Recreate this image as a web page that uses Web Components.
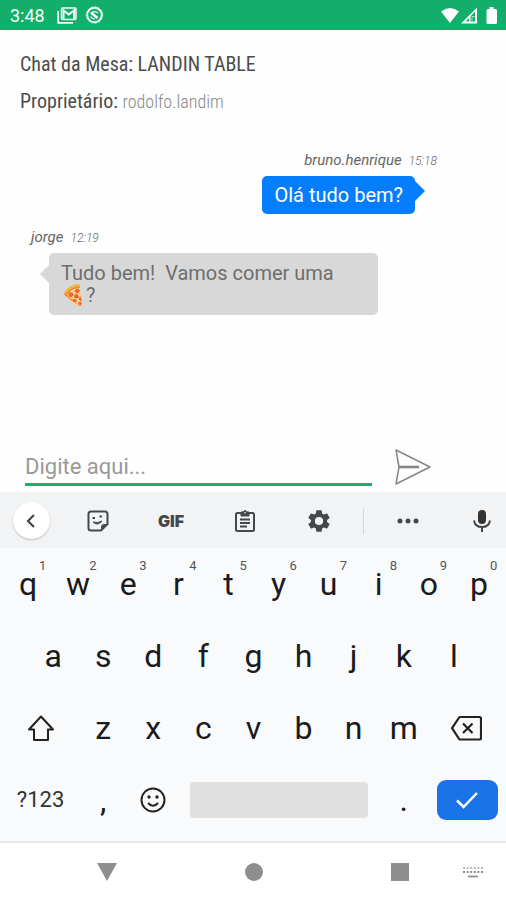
<!DOCTYPE html>
<html lang="pt-BR">
<head>
<meta charset="utf-8">
<meta name="viewport" content="width=device-width, initial-scale=1">
<title>Chat da Mesa</title>
<style>
  html, body { margin: 0; }
  body { font-family: Roboto, "Liberation Sans", sans-serif; background: #fefefe; color: #555; }
</style>
</head>
<body>
<chat-app></chat-app>

<script>
const define = (name, html, setup) => {
  const template = document.createElement('template');
  template.innerHTML = html;
  customElements.define(name, class extends HTMLElement {
    connectedCallback() {
      if (this.shadowRoot) return;
      this.attachShadow({ mode: 'open' }).append(template.content.cloneNode(true));
      if (setup) setup(this, this.shadowRoot);
    }
  });
};

const button = 'button{font:inherit;color:inherit;background:none;border:0;padding:0;margin:0;cursor:pointer;display:flex;align-items:center;justify-content:center}svg{display:block}';

define('status-bar', `
<style>
  :host { display: flex; align-items: center; height: 30px; padding: 0 8px 0 10px; background: #12ae6a; color: #f4fff9; box-sizing: border-box; }
  time { font-size: 18px; line-height: 30px; font-weight: 400; margin-right: 12px; padding-top: 2px; }
  .icons { display: flex; align-items: center; gap: 8px; }
  .right { margin-left: auto; gap: 1px; }
  svg { display: block; }
  .battery { margin-left: 7px; }
</style>
<time>3:48</time>
<div class="icons">
  <svg width="20" height="17" viewBox="0 0 20 17" fill="none" stroke="currentColor"><path d="M1.2 4v11.8H16" stroke-width="1.7"/><rect x="4.500" y="1" width="14.500" height="11.500" rx="1" stroke-width="1.500"/><path d="M6.500 12V3.500L11.800 7.500L17 3.500V12" stroke-width="2"/></svg>
  <svg width="19" height="18" viewBox="0 0 19 18" fill="none" stroke="currentColor"><circle cx="9.500" cy="9" r="7.300" stroke-width="1.900"/><circle cx="9.500" cy="9" r="8.300" stroke-width="1" stroke-dasharray="2 1.500" opacity=".6"/><path d="M5.500 7.500Q9 4 13 7" stroke-width="1.400"/><path d="M6.500 7L12.500 12" stroke-width="2.600"/><path d="M5.500 10.500Q7 13 10 13" stroke-width="1.200"/></svg>
</div>
<div class="icons right">
  <svg width="20" height="17" viewBox="0 0 20 17" fill="#fff"><path d="M1 4.500Q10-2.500 19 4.500L10 16Z"/></svg>
  <svg width="17" height="17" viewBox="0 0 17 17"><path fill="#fff" fill-rule="evenodd" d="M0 16.500L16 .5V16.500ZM4.500 14.500H8V11ZM9.500 14.500H14V4.500L9.500 9.500Z"/><path d="M11 14V9.500h2.500" fill="none" stroke="#fff" stroke-width="1" opacity=".6"/></svg>
  <svg class="battery" width="12" height="17" viewBox="0 0 12 17" fill="#fff"><path d="M3.500 0h4v2h2q1.500 0 1.500 1.500v12q0 1.500-1.500 1.500h-7.500q-1.500 0-1.500-1.500v-12q0-1.500 1.500-1.500h1.500z"/></svg>
</div>`);

define('chat-header', `
<style>
  :host { display: flex; flex-direction: column; gap: 13px; padding: 22px 20px 0; font-family: "Roboto Condensed", Roboto, sans-serif; color: #4c4c4c; }
  h1, p { margin: 0; font-size: 20px; line-height: 24px; font-weight: 400; }
  .owner { font-size: 18px; font-weight: 300; color: #888; }
</style>
<h1><slot name="title"></slot></h1>
<p>Proprietário: <span class="owner"><slot name="owner"></slot></span></p>`);

define('chat-message', `
<style>
  :host { display: flex; flex-direction: column; align-items: flex-start; padding: 0 128px 0 49px; --bubble: #d8d8d8; color: #6e6e6e; }
  :host([own]) { align-items: flex-end; padding: 0 91px 0 49px; --bubble: #047eff; color: #fff; }
  .meta { display: flex; align-items: baseline; gap: 7px; font-style: italic; font-size: 15px; line-height: 18px; color: #666; margin: 0 0 6px -18px; }
  :host([own]) .meta { margin: 0 -22px 6px 0; }
  time { font-size: 12px; font-weight: 300; }
  .bubble { position: relative; box-sizing: border-box; background: var(--bubble); border-radius: 5px; padding: 9px 12px; font-size: 20px; line-height: 22px; white-space: pre-wrap; }
  :host([own]) .bubble { padding: 8px 12px; }
  :host(:not([own])) .bubble { width: 100%; }
  .bubble::before { content: ""; position: absolute; top: 11px; left: -9px; width: 10px; height: 20px; background: var(--bubble); clip-path: polygon(100% 0, 0 50%, 100% 100%); }
  :host([own]) .bubble::before { top: 3px; left: auto; right: -10px; width: 12px; height: 24px; clip-path: polygon(0 0, 100% 50%, 0 100%); }
</style>
<div class="meta"><span id="name"></span><time id="time"></time></div>
<div class="bubble"><slot></slot></div>`, (host, root) => {
  root.getElementById('name').textContent = host.getAttribute('author');
  root.getElementById('time').textContent = host.getAttribute('time');
});

define('chat-composer', `
<style>${button}
  :host { display: block; padding: 0 71px 6px 25px; }
  form { display: flex; align-items: center; gap: 20px; margin: 0; }
  input { flex: 1; min-width: 0; height: 38px; box-sizing: border-box; border: 0; border-bottom: 3px solid #1fad6e; border-radius: 0; background: none; padding: 1px 0 0; outline: 0; font: 400 22px/24px Roboto, sans-serif; color: #555; }
  input::placeholder { color: #999; opacity: 1; }
</style>
<form>
  <input type="text" placeholder="Digite aqui..." aria-label="Mensagem">
  <button type="button" aria-label="Enviar"><svg width="43" height="38" viewBox="0 0 43 38" fill="none" stroke="#858585" stroke-width="1.500" stroke-linejoin="round"><path d="M4 2L38 19L4 36L7 19Z"/><path d="M7 19H27" stroke-width="2.600"/></svg></button>
</form>`);

define('keyboard-toolbar', `
<style>${button}
  :host { display: grid; grid-template-columns: 62fr 72fr 74fr 74fr 73fr 16fr 74fr 61fr; align-items: center; height: 56px; padding-top: 1px; box-sizing: border-box; background: #f1f3f4; color: #454749; }
  button { width: 100%; height: 100%; }
  .back span { display: flex; align-items: center; justify-content: center; width: 37px; height: 37px; border-radius: 50%; background: #fff; box-shadow: 0 1px 2px #bbb; }
  .gif { font: 900 16px/20px Inter, Roboto, sans-serif; }
  .rule { justify-self: center; width: 1px; height: 26px; background: #d4d6d8; }
  .mic { justify-content: flex-end; padding-right: 12px; }
</style>
<button class="back" aria-label="Voltar"><span><svg width="12" height="16" viewBox="0 0 12 16" fill="none" stroke="currentColor" stroke-width="2.200"><path d="M9 2L3 8L9 14"/></svg></span></button>
<button aria-label="Figurinhas"><svg width="22" height="22" viewBox="0 0 22 22" fill="none" stroke="currentColor" stroke-width="2"><path d="M4 1.500H18Q20.500 1.500 20.500 4V14L14 20.500H4Q1.500 20.500 1.500 18V4Q1.500 1.500 4 1.500Z"/><path d="M20.500 14.500H17Q14.500 14.500 14.500 17V20.500Z" fill="currentColor" stroke-width="1"/><path d="M6 12Q10.500 16.500 15 11Q11 13.500 6 12Z" fill="currentColor" stroke-width="1"/><path d="M5.500 8h2.500M12.500 6.500h2.500" stroke-width="2"/></svg></button>
<button class="gif">GIF</button>
<button aria-label="Área de transferência"><svg width="22" height="24" viewBox="0 0 22 24" fill="none" stroke="currentColor" stroke-width="2"><rect x="2" y="4" width="18" height="18" rx="1.500"/><path d="M7 3h2q2-3 4 0h2v4H7z" fill="currentColor" stroke-width="1"/><circle cx="11" cy="3.700" r=".8" fill="#f1f3f4" stroke="none"/><path d="M6 10.500h10M6 14h10M6 17.500h7"/></svg></button>
<button aria-label="Configurações"><svg width="26" height="26" viewBox="0 0 24 24" fill="currentColor"><path d="M19.430 12.980c.04-.32.07-.64.07-.98s-.03-.66-.07-.98l2.110-1.650c.19-.15.24-.42.12-.64l-2-3.460c-.12-.22-.39-.3-.61-.22l-2.490 1c-.52-.4-1.080-.73-1.690-.98l-.38-2.650A.49.49 0 0 0 14 2h-4c-.25 0-.46.18-.49.42l-.38 2.650c-.61.25-1.170.59-1.690.98l-2.490-1c-.23-.09-.49 0-.61.22l-2 3.460c-.13.22-.07.49.12.64l2.110 1.650c-.04.32-.07.65-.07.98s.03.66.07.98l-2.110 1.650c-.19.15-.24.42-.12.64l2 3.460c.12.22.39.3.61.22l2.490-1c.52.4 1.080.73 1.690.98l.38 2.650c.03.24.24.42.49.42h4c.25 0 .46-.18.49-.42l.38-2.650c.61-.25 1.170-.59 1.690-.98l2.490 1c.23.09.49 0 .61-.22l2-3.460c.12-.22.07-.49-.12-.64zM12 15.800a3.800 3.800 0 1 1 0-7.600 3.800 3.800 0 0 1 0 7.600z"/></svg></button>
<span class="rule"></span>
<button aria-label="Mais"><svg width="22" height="6" viewBox="0 0 22 6" fill="currentColor"><circle cx="3" cy="3" r="2.500"/><circle cx="11" cy="3" r="2.500"/><circle cx="19" cy="3" r="2.500"/></svg></button>
<button class="mic" aria-label="Ditar"><svg width="24" height="26" viewBox="0 0 24 26" fill="none" stroke="currentColor"><rect x="8" y="2" width="8" height="14" rx="4" fill="#333" stroke="none"/><path d="M4 12.500Q5 19 12 19T20 12.500M12 19v5" stroke-width="2"/></svg></button>`);

define('key-cap', `
<style>${button}
  :host { display: flex; min-width: 0; box-sizing: border-box; grid-column: span 2; color: #1a1b1c; }
  :host([wide]) { grid-column: span 3; }
  :host([space]) { grid-column: span 8; padding: 18px 11px 18px 12px; }
  :host([enter]) { grid-column: span 3; padding: 16px 6px 16px 8px; }
  button { position: relative; width: 100%; font-size: 32px; line-height: 36px; }
  :host([wide]) button { font-size: 22px; color: #333; }
  :host([space]) button { background: #e0e0e0; border-radius: 4px; }
  :host([enter]) button { background: #1a73e8; border-radius: 9px; }
  sup { position: absolute; left: calc(50% + 11px); top: 8px; font-size: 13px; line-height: 20px; color: #555; }
</style>
<button><slot></slot></button>`, (host, root) => {
  const b = root.querySelector('button');
  if (host.hasAttribute('label')) b.setAttribute('aria-label', host.getAttribute('label'));
  if (host.hasAttribute('hint')) {
    const s = document.createElement('sup');
    s.textContent = host.getAttribute('hint');
    b.append(s);
  }
});

const keys = (letters, hints = '') => [...letters].map((c, i) => `<key-cap${hints ? ` hint="${hints[i]}"` : ''}>${c}</key-cap>`).join('');

define('soft-keyboard', `
<style>
  :host { display: block; background: #f8fafc; border-bottom: 2px solid #e7e9eb; }
  .rows { display: grid; grid-auto-rows: 72px; padding: 0 2px 5px 3px; }
  .row { display: grid; grid-template-columns: repeat(20, minmax(0, 1fr)); }
  .inset { grid-template-columns: repeat(18, minmax(0, 1fr)); padding: 0 5%; }
  svg { display: block; }
</style>
<keyboard-toolbar></keyboard-toolbar>
<div class="rows">
  <div class="row">${keys('qwertyuiop', '1234567890')}</div>
  <div class="row inset">${keys('asdfghjkl')}</div>
  <div class="row">
    <key-cap wide label="Maiúsculas"><svg width="30" height="28" viewBox="0 0 30 28" fill="none" stroke="#222" stroke-width="2" stroke-linejoin="round"><path d="M15 2.500L27 15.500H22V26H8V15.500H3Z"/></svg></key-cap>
    ${keys('zxcvbnm')}
    <key-cap wide label="Apagar"><svg width="32" height="26" viewBox="0 0 32 26" fill="none" stroke="#222" stroke-width="2.200" stroke-linejoin="round"><path d="M9.500 2H29.500Q31 2 31 3.500V23Q31 24.500 29.500 24.500H9.500L2 13.200Z"/><path d="M13 8.500l9.500 9.500M22.500 8.500L13 18"/></svg></key-cap>
  </div>
  <div class="row">
    <key-cap wide>?123</key-cap>
    <key-cap>,</key-cap>
    <key-cap label="Emoji"><svg width="28" height="28" viewBox="0 0 28 28" fill="none" stroke="#222" stroke-width="2"><circle cx="14" cy="14" r="11.500"/><path d="M9 17q5 5.500 10 0" /><circle cx="10" cy="11" r="1.700" fill="#222" stroke="none"/><circle cx="18" cy="11" r="1.700" fill="#222" stroke="none"/></svg></key-cap>
    <key-cap space label="Espaço"></key-cap>
    <key-cap>.</key-cap>
    <key-cap enter label="Concluir"><svg width="26" height="22" viewBox="0 0 26 22" fill="none" stroke="#fff" stroke-width="2.500"><path d="M3 11.500L9.500 18L23 4"/></svg></key-cap>
  </div>
</div>`);

define('system-nav', `
<style>${button}
  :host { display: grid; grid-template-columns: 34fr 146fr 147fr 23fr 99fr 48fr 9fr; height: 57px; background: #fff; }
  button { height: 100%; }
  .down { grid-column: 2; } .home { grid-column: 3; } .recent { grid-column: 5; } .keys { grid-column: 6; }
</style>
<button class="down" aria-label="Ocultar teclado"><svg width="20" height="18" viewBox="0 0 20 18" fill="#8e8e8e"><path d="M0 0H20L10 18Z"/></svg></button>
<button class="home" aria-label="Início"><svg width="18" height="18" viewBox="0 0 18 18" fill="#8e8e8e"><circle cx="9" cy="9" r="9"/></svg></button>
<button class="recent" aria-label="Recentes"><svg width="18" height="18" viewBox="0 0 18 18" fill="#8e8e8e"><path d="M0 0h18v18H0z"/></svg></button>
<button class="keys" aria-label="Teclado"><svg width="20" height="12" viewBox="0 0 20 12" fill="none" stroke="#8e8e8e" stroke-width="2"><path d="M0 2H20" stroke-dasharray="2 1.600" opacity=".6"/><path d="M0 6H20" stroke-dasharray="2 1.600"/><path d="M5 10.500H15" stroke-width="1.800"/></svg></button>`);

define('chat-app', `
<style>
  :host { display: flex; flex-direction: column; min-height: 100vh; }
  main { flex: 1; display: flex; flex-direction: column; gap: 14px; padding: 37px 0 16px; }
</style>
<status-bar></status-bar>
<chat-header><span slot="title">Chat da Mesa: LANDIN TABLE</span><span slot="owner">rodolfo.landim</span></chat-header>
<main>
  <chat-message own author="bruno.henrique" time="15:18">Olá tudo bem?</chat-message>
  <chat-message author="jorge" time="12:19">Tudo bem!  Vamos comer uma 🍕?</chat-message>
</main>
<chat-composer></chat-composer>
<soft-keyboard></soft-keyboard>
<system-nav></system-nav>`);
</script>
</body>
</html>
